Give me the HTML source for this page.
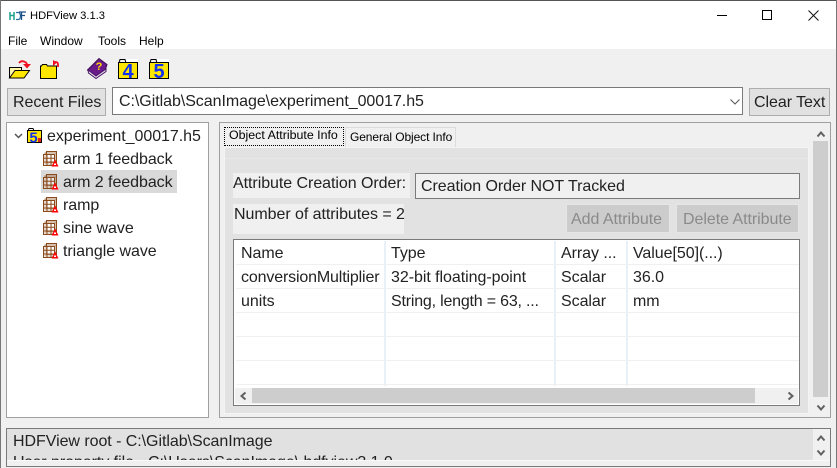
<!DOCTYPE html>
<html><head><meta charset="utf-8"><title>HDFView 3.1.3</title>
<style>
html,body{margin:0;padding:0;width:837px;height:468px;overflow:hidden;background:#f0f0f0}
body{position:relative;font-family:"Liberation Sans",sans-serif;color:#111}
.a{position:absolute;box-sizing:border-box}
.t{position:absolute;white-space:nowrap;font-size:16px;line-height:18px;letter-spacing:-.05px;color:#222}
.m{position:absolute;white-space:nowrap;font-size:12px;line-height:14px;color:#000}
svg{position:absolute;overflow:visible}
.hl{position:absolute;height:1px;background:#eff0f1;left:236px;width:563px}
.vl{position:absolute;width:2px;background:#eaf0f7;top:241px;height:145px}
</style></head><body>
<div class="a" style="left:0;top:0;width:837px;height:49px;background:#fff"></div>
<div class="a" style="left:0;top:0;width:837px;height:1px;background:#555"></div>
<div class="a" style="left:836px;top:0;width:1px;height:468px;background:#777"></div>
<div class="a" style="left:0;top:0;width:1px;height:468px;background:#777"></div>

<svg style="left:9px;top:11px" width="17" height="10" viewBox="0 0 17 10"><path d="M1 1v8M5 1v8M1 4.500h4" stroke="#1ea08c" stroke-width="1.500" fill="none"/><path d="M7 1.500h2.500q2 .5 2 3.500t-2 3.500H7" stroke="#2a70a0" stroke-width="1.300" fill="none"/><path d="M10 1h7M12.500 1v8M11 4.500h5" stroke="#1c4e8c" stroke-width="1.300" fill="none"/></svg>
<div class="m" style="left:30px;top:9px;font-size:11.200px">HDFView 3.1.3</div>

<div class="m" style="left:8px;top:34px">File</div>
<div class="m" style="left:40px;top:34px">Window</div>
<div class="m" style="left:98px;top:34px">Tools</div>
<div class="m" style="left:139px;top:34px">Help</div>

<div class="a" style="left:717px;top:15px;width:10px;height:1px;background:#000"></div>
<div class="a" style="left:762px;top:10px;width:10px;height:10px;border:1px solid #000"></div>
<svg style="left:808px;top:10px" width="11" height="11"><path d="M.5.500l10 10M10.500.500l-10 10" stroke="#111" stroke-width="1" fill="none"/></svg>

<!-- toolbar -->
<svg style="left:9px;top:60px" width="21" height="19" viewBox="0 0 21 19"><path d="M.5 18V7.500h12v3h2V18z" fill="#fff6a8" stroke="#000"/><path d="M.5 18l5.500-7.500h14.500L15 18z" fill="#ffe600" stroke="#000"/><path d="M10 3q2-2.500 5-1.500t3 3.500" stroke="#f01020" stroke-width="1.800" fill="none"/><path d="M14 4h8l-4 4.500z" fill="#f01020"/></svg>
<svg style="left:40px;top:60px" width="20" height="20" viewBox="0 0 20 20"><path d="M.5 18.500V6h1l1-1.500h4L7.500 6h9v12.500z" fill="#ffe600" stroke="#000"/><path d="M18 7V4q0-2-3-2" stroke="#f01020" stroke-width="1.800" fill="none"/><path d="M13 0v6l4-3.500z" fill="#f01020"/></svg>
<svg style="left:87px;top:58px" width="21" height="21" viewBox="0 0 21 21"><path d="M.5 12L12 .5l8 6-2 6-9 7z" fill="#6a1b8a" stroke="#3a1050"/><path d="M1 12l8 6 10-7v2.500L9 20.500 1.500 15z" fill="#e8e4ea" stroke="#4a1568"/><text x="12" y="12" text-anchor="middle" font-size="11" font-weight="bold" fill="#ffd800" font-family="Liberation Sans">?</text></svg>
<svg style="left:118px;top:59px" width="20" height="21" viewBox="0 0 20 21"><rect x="8" y="0" width="12" height="4" fill="#fff"/><path d="M1 4l1-3.500h5L8 4" fill="none" stroke="#000"/><rect x=".5" y="3.500" width="19" height="16" fill="#ffe600" stroke="#000"/><text x="10" y="19" text-anchor="middle" font-size="20" font-weight="bold" fill="#1030f0" font-family="Liberation Sans">4</text></svg>
<svg style="left:149px;top:59px" width="20" height="21" viewBox="0 0 20 21"><rect x="8" y="0" width="12" height="4" fill="#fff"/><path d="M1 4l1-3.500h5L8 4" fill="none" stroke="#000"/><rect x=".5" y="3.500" width="19" height="16" fill="#ffe600" stroke="#000"/><text x="10" y="19" text-anchor="middle" font-size="20" font-weight="bold" fill="#1030f0" font-family="Liberation Sans">5</text></svg>

<!-- top row -->
<div class="a" style="left:7px;top:88px;width:99px;height:28px;background:#e1e1e1;border:1px solid #adadad"></div>
<div class="t" style="left:13px;top:94px">Recent Files</div>
<div class="a" style="left:112px;top:87px;width:631px;height:28px;background:#fff;border:1px solid #7a7a7a"></div>
<div class="t" style="left:119px;top:93px">C:\Gitlab\ScanImage\experiment_00017.h5</div>
<svg style="left:730px;top:99px" width="10" height="6"><path d="M.5.500L5 5 9.500.500" stroke="#555" fill="none"/></svg>
<div class="a" style="left:749px;top:88px;width:81px;height:28px;background:#e1e1e1;border:1px solid #adadad"></div>
<div class="t" style="left:754px;top:94px">Clear Text</div>

<!-- tree -->
<div class="a" style="left:6px;top:122px;width:203px;height:296px;background:#fff;border:1px solid #a0a0a0"></div>
<svg style="left:14px;top:133px" width="9" height="6"><path d="M1 1l3.500 3.500L8 1" stroke="#555" stroke-width="1.500" fill="none"/></svg>
<svg style="left:27px;top:128px" width="16" height="16" viewBox="0 0 16 16"><path d="M1 3l1-2.500h4l1 2.500" fill="none" stroke="#000"/><rect x=".5" y="2.500" width="14" height="12" fill="#ffe600" stroke="#000"/><text x="6.500" y="14.500" text-anchor="middle" font-size="15" font-weight="bold" fill="#1030f0" font-family="Liberation Sans">5</text><rect x="11" y="10" width="3" height="4" fill="#e02020"/></svg>
<div class="t" style="left:47px;top:128px">experiment_00017.h5</div>
<div class="a" style="left:41px;top:170px;width:136px;height:23px;background:#d9d9d9"></div>
<svg width="0" height="0" style="position:absolute"><defs><g id="d"><path d="M3.500.500h10v11h-10z" fill="none" stroke="#8a4a1a"/><path d="M2 2h11v11H2z" fill="none" stroke="#8a4a1a" opacity=".7"/><path d="M.500 3.500h11v11H.500z" fill="#fff" fill-opacity=".4" stroke="#8a4a1a"/><path d="M4 3.500v11M8 3.500v11M.500 7.300h11M.500 11h11" stroke="#8a4a1a" fill="none"/><path d="M8.500 15.500l3.500-7 3.500 7z" fill="#f00"/><rect x="11" y="12.500" width="2" height="1.500" fill="#fff"/></g></defs></svg>
<svg style="left:43px;top:151px" width="16" height="16"><use href="#d"/></svg>
<svg style="left:43px;top:174px" width="16" height="16"><use href="#d"/></svg>
<svg style="left:43px;top:197px" width="16" height="16"><use href="#d"/></svg>
<svg style="left:43px;top:220px" width="16" height="16"><use href="#d"/></svg>
<svg style="left:43px;top:243px" width="16" height="16"><use href="#d"/></svg>
<div class="t" style="left:63px;top:151px">arm 1 feedback</div>
<div class="t" style="left:63px;top:174px">arm 2 feedback</div>
<div class="t" style="left:63px;top:197px">ramp</div>
<div class="t" style="left:63px;top:220px">sine wave</div>
<div class="t" style="left:63px;top:243px">triangle wave</div>

<!-- right panel -->
<div class="a" style="left:219px;top:122px;width:612px;height:296px;background:#f0f0f0;border:1px solid #a0a0a0"></div>
<div class="a" style="left:224px;top:147px;width:585px;height:267px;background:#e2e2e2;border:1px solid #f4f4f4"></div>
<div class="a" style="left:225px;top:158px;width:583px;height:1px;background:#e8e8e8"></div>
<div class="a" style="left:345px;top:127px;width:111px;height:20px;background:#f0f0f0;border:1px solid #dcdcdc;border-bottom:0"></div>
<div class="m" style="left:350px;top:130px;font-size:12px;letter-spacing:-.1px">General Object Info</div>
<div class="a" style="left:224px;top:127px;width:120px;height:19px;background:#f0f0f0;border:1px dotted #000"></div>
<div class="m" style="left:229px;top:128px;font-size:12.400px">Object Attribute Info</div>

<div class="a" style="left:233px;top:173px;width:177px;height:25px;background:#f0f0f0"></div>
<div class="t" style="left:233px;top:175px">Attribute Creation Order:</div>
<div class="a" style="left:415px;top:173px;width:385px;height:26px;background:#f0f0f0;border:1px solid #7a7a7a"></div>
<div class="t" style="left:421px;top:178px">Creation Order NOT Tracked</div>
<div class="a" style="left:233px;top:204px;width:171px;height:30px;background:#f0f0f0"></div>
<div class="t" style="left:234px;top:206px">Number of attributes = 2</div>
<div class="a" style="left:566px;top:204px;width:104px;height:29px;background:#cccccc;border:1px solid #e6e6e6"></div>
<div class="t" style="left:571px;top:211px;color:#8a8a8a">Add Attribute</div>
<div class="a" style="left:676px;top:204px;width:123px;height:29px;background:#cccccc;border:1px solid #e6e6e6"></div>
<div class="t" style="left:683px;top:211px;color:#8a8a8a">Delete Attribute</div>

<!-- table -->
<div class="a" style="left:233px;top:239px;width:567px;height:167px;background:#fff;border:1px solid #7a7a7a"></div>
<div class="vl" style="left:384px"></div><div class="vl" style="left:554px"></div><div class="vl" style="left:626px"></div>
<div class="hl" style="top:264px"></div><div class="hl" style="top:288px"></div><div class="hl" style="top:312px"></div><div class="hl" style="top:336px"></div><div class="hl" style="top:360px"></div><div class="hl" style="top:384px"></div>
<div class="t" style="left:241px;top:245px">Name</div>
<div class="t" style="left:391px;top:245px">Type</div>
<div class="t" style="left:561px;top:245px">Array ...</div>
<div class="t" style="left:633px;top:245px">Value[50](...)</div>
<div class="t" style="left:241px;top:269px;letter-spacing:-.15px">conversionMultiplier</div>
<div class="t" style="left:391px;top:269px">32-bit floating-point</div>
<div class="t" style="left:561px;top:269px">Scalar</div>
<div class="t" style="left:633px;top:269px">36.0</div>
<div class="t" style="left:241px;top:293px">units</div>
<div class="t" style="left:391px;top:293px;letter-spacing:-.2px">String, length = 63, ...</div>
<div class="t" style="left:561px;top:293px">Scalar</div>
<div class="t" style="left:633px;top:293px">mm</div>

<div class="a" style="left:235px;top:388px;width:563px;height:16px;background:#f0f0f0"></div>
<div class="a" style="left:252px;top:388px;width:503px;height:15px;background:#cdcdcd"></div>
<svg style="left:240px;top:392px" width="7" height="8"><path d="M5.500 .5L1.500 4l4 3.500" stroke="#606060" stroke-width="2" fill="none"/></svg>
<svg style="left:787px;top:392px" width="7" height="8"><path d="M1.500 .5L5.500 4l-4 3.500" stroke="#606060" stroke-width="2" fill="none"/></svg>

<!-- v scrollbar -->
<div class="a" style="left:813px;top:124px;width:16px;height:292px;background:#f0f0f0"></div>
<div class="a" style="left:813px;top:141px;width:15px;height:256px;background:#cdcdcd"></div>
<svg style="left:817px;top:131px" width="8" height="7"><path d="M.5 5.500L4 1.500l3.500 4" stroke="#606060" stroke-width="2" fill="none"/></svg>
<svg style="left:817px;top:404px" width="8" height="7"><path d="M.5 1.500L4 5.500l3.500-4" stroke="#606060" stroke-width="2" fill="none"/></svg>

<!-- status -->
<div class="a" style="left:6px;top:428px;width:825px;height:39px;background:#f0f0f0;border:1px solid #7a7a7a;overflow:hidden">
<div class="a" style="left:0;top:0;width:806px;height:31px;background:#e1e1e1;overflow:hidden">
<div class="t" style="left:6px;top:4px">HDFView root - C:\Gitlab\ScanImage</div>
<div class="t" style="left:6px;top:25px">User property file - C:\Users\ScanImage\.hdfview3.1.0</div>
</div>
<div class="a" style="left:0;top:31px;width:823px;height:1px;background:#fafafa"></div>
</div>
<svg style="left:817px;top:435px" width="8" height="7"><path d="M.5 5.500L4 1.500l3.500 4" stroke="#606060" stroke-width="2" fill="none"/></svg>
<svg style="left:817px;top:449px" width="8" height="7"><path d="M.5 1.500L4 5.500l3.500-4" stroke="#606060" stroke-width="2" fill="none"/></svg>
</body></html>
